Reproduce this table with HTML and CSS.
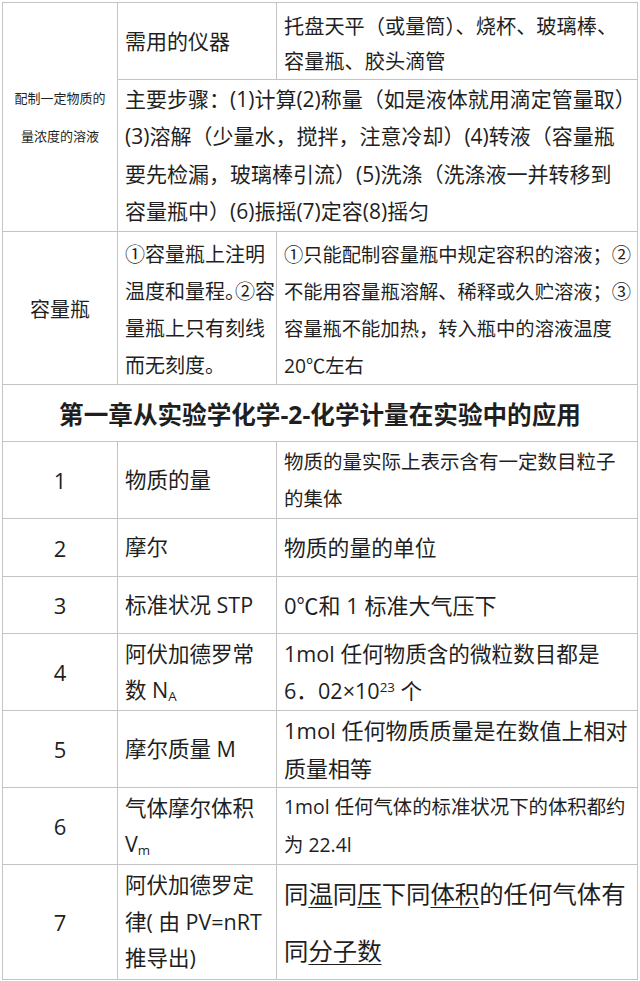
FILE: index.html
```html
<!DOCTYPE html>
<html lang="zh-CN">
<head>
<meta charset="utf-8">
<title>化学计量</title>
<link rel="stylesheet" href="styles.css">
</head>
<body>
<table class="sheet">
  <colgroup>
    <col class="c1">
    <col class="c2">
    <col class="c3">
  </colgroup>
  <tr class="r-tools">
    <td rowspan="2" class="lead">配制一定物质的<br>量浓度的溶液</td>
    <td class="label">需用的仪器</td>
    <td class="tools">托盘天平（或量筒）、烧杯、玻璃棒、<br>容量瓶、胶头滴管</td>
  </tr>
  <tr class="r-steps">
    <td colspan="2" class="steps">主要步骤：(1)计算(2)称量（如是液体就用滴定管量取）<br>(3)溶解（少量水，搅拌，注意冷却）(4)转液（容量瓶<br>要先检漏，玻璃棒引流）(5)洗涤（洗涤液一并转移到<br>容量瓶中）(6)振摇(7)定容(8)摇匀</td>
  </tr>
  <tr class="r-flask">
    <td class="flask">容量瓶</td>
    <td class="note note-mid">①容量瓶上注明<br>温度和量程<span class="half">。</span>②容<br>量瓶上只有刻线<br>而无刻度。</td>
    <td class="note note-right">①只能配制容量瓶中规定容积的溶液；②<br>不能用容量瓶溶解、稀释或久贮溶液；③<br>容量瓶不能加热，转入瓶中的溶液温度<br>20℃左右</td>
  </tr>
  <tr class="r-title">
    <td colspan="3" class="title">第一章从实验学化学-2-化学计量在实验中的应用</td>
  </tr>
  <tr class="r-1">
    <td class="num">1</td>
    <td class="term">物质的量</td>
    <td class="def def-1">物质的量实际上表示含有一定数目粒子<br>的集体</td>
  </tr>
  <tr class="r-2">
    <td class="num">2</td>
    <td class="term">摩尔</td>
    <td class="def def-2">物质的量的单位</td>
  </tr>
  <tr class="r-3">
    <td class="num">3</td>
    <td class="term">标准状况 STP</td>
    <td class="def def-3">0℃和 1 标准大气压下</td>
  </tr>
  <tr class="r-4">
    <td class="num">4</td>
    <td class="term">阿伏加德罗常<br>数 N<sub>A</sub></td>
    <td class="def def-4">1mol 任何物质含的微粒数目都是<br>6．02×10<sup>23</sup> 个</td>
  </tr>
  <tr class="r-5">
    <td class="num">5</td>
    <td class="term">摩尔质量 M</td>
    <td class="def def-5">1mol 任何物质质量是在数值上相对<br>质量相等</td>
  </tr>
  <tr class="r-6">
    <td class="num">6</td>
    <td class="term">气体摩尔体积<br>V<sub>m</sub></td>
    <td class="def def-6">1mol 任何气体的标准状况下的体积都约<br>为 22.4l</td>
  </tr>
  <tr class="r-7">
    <td class="num">7</td>
    <td class="term">阿伏加德罗定<br>律( 由 PV=nRT<br>推导出)</td>
    <td class="def def-7">同<u>温</u>同<u>压</u>下同<u>体积</u>的任何气体有<br>同<u>分子数</u></td>
  </tr>
</table>
</body>
</html>
```

FILE: styles.css
```css
html, body {
  margin: 0;
  padding: 0;
  background: #ffffff;
}

body {
  color: #1f1f1f;
  font-family: "Open Sans", "Noto Sans CJK SC", sans-serif;
}

.sheet {
  border-collapse: collapse;
  table-layout: fixed;
  width: 635px;
  margin: 2px 0 0 2px;
}

.c1 { width: 115px; }
.c2 { width: 159px; }
.c3 { width: 361px; }

.sheet td {
  border: 1px solid #c4c4c4;
  padding: 0 0 0 7px;
  vertical-align: middle;
  white-space: nowrap;
  font-weight: 400;
}

/* row heights */
.r-tools { height: 77px; }
.r-steps { height: 152px; }
.r-flask { height: 153px; }
.r-title { height: 57px; }
.r-1 { height: 77px; }
.r-2 { height: 58px; }
.r-3 { height: 57px; }
.r-4 { height: 77px; }
.r-5 { height: 76px; }
.r-6 { height: 77px; }
.r-7 { height: 114px; }

/* top section */
.sheet .lead {
  padding: 0;
  text-align: center;
  font-size: 13px;
  line-height: 38px;
}

.label {
  font-size: 21px;
  line-height: 36px;
}

.sheet .tools {
  font-size: 20.2px;
  line-height: 35px;
  padding-top: 6px;
}

.steps {
  font-size: 21px;
  line-height: 37.5px;
}

.sheet .flask {
  padding: 0;
  text-align: center;
  font-size: 20px;
}

.sheet .note {
  line-height: 37px;
  padding-top: 4px;
}

.note-mid {
  font-size: 20px;
}

.note-right {
  font-size: 19.3px;
}

.half {
  font-feature-settings: "halt" 1;
}

.sheet .title {
  padding: 0;
  text-align: center;
  font-size: 24.6px;
  font-weight: 700;
}

/* lower table */
.sheet .num {
  padding: 0;
  text-align: center;
  font-size: 22px;
}

.term {
  font-size: 21.5px;
  line-height: 36.5px;
}

.def {
  line-height: 37px;
}

.def-1 { font-size: 19.5px; }
.def-2 { font-size: 21.8px; }
.def-3 { font-size: 22px; }
.def-4 { font-size: 21.6px; }
.def-5 { font-size: 22px; line-height: 38px; }
.def-6 { font-size: 19.4px; line-height: 38px; }
.sheet .def-7 { font-size: 24.4px; line-height: 57px; }

.def-7 u {
  text-decoration: underline;
  text-decoration-thickness: 1px;
  text-underline-offset: 4px;
}

sub, sup {
  font-size: 0.62em;
  line-height: 0;
}

sub {
  vertical-align: -0.25em;
}

sup {
  vertical-align: 0.55em;
}
```
